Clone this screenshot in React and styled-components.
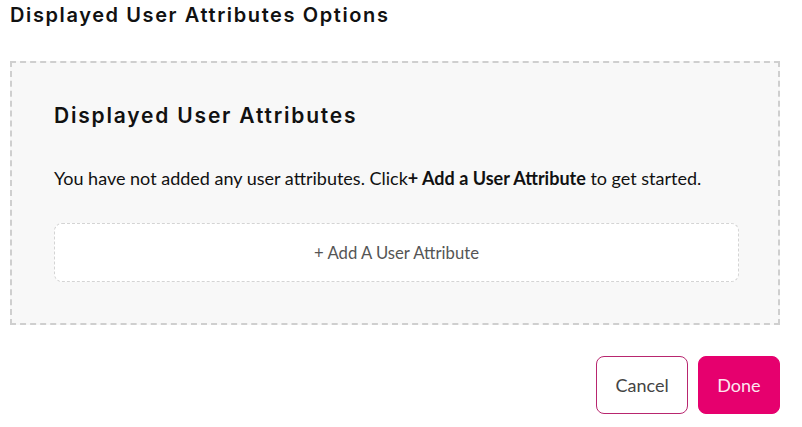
import React from "react";
import styled, { createGlobalStyle } from "styled-components";

const GlobalStyle = createGlobalStyle`
  html, body {
    margin: 0;
    padding: 0;
    background: #fff;
  }
  body {
    font-family: "Lato", "Open Sans", sans-serif;
    color: #1a1a1a;
  }
`;

const Page = styled.div`
  width: 802px;
  padding: 0 22px 0 10px;
  box-sizing: border-box;
`;

const Title = styled.h1`
  margin: 0;
  padding-top: 2px;
  font-family: "Inter", sans-serif;
  font-size: 20px;
  font-weight: 600;
  letter-spacing: 1.6px;
  line-height: 26px;
  color: #111;
`;

const Panel = styled.section`
  margin-top: 33px;
  height: 264px;
  box-sizing: border-box;
  border: 2px dashed #cfcfcf;
  background: #f8f8f8;
  padding: 39px 42px 0 42px;
`;

const PanelTitle = styled.h2`
  margin: 0;
  font-family: "Inter", sans-serif;
  font-size: 21px;
  font-weight: 600;
  letter-spacing: 1.8px;
  line-height: 28px;
  color: #111;
`;

const Message = styled.p`
  margin: 36px 0 0 0;
  font-size: 18px;
  line-height: 24px;
  color: #111;

  strong {
    font-weight: 700;
  }
`;

const AddBox = styled.button`
  display: flex;
  align-items: center;
  justify-content: center;
  width: 685px;
  height: 59px;
  margin-top: 33px;
  border: 1px dashed #d4d4d4;
  border-radius: 8px;
  background: #fff;
  font-family: "Lato", sans-serif;
  font-size: 16.7px;
  color: #555;
  cursor: pointer;
`;

const Footer = styled.div`
  display: flex;
  justify-content: flex-end;
  gap: 10px;
  margin-top: 31px;
`;

const Button = styled.button`
  height: 58px;
  padding: 0 ${(p) => (p.$primary ? "18.5px" : "18px")};
  border-radius: 8px;
  border: 1px solid ${(p) => (p.$primary ? "#e6006e" : "#b8266f")};
  background: ${(p) => (p.$primary ? "#e6006e" : "#fff")};
  color: ${(p) => (p.$primary ? "#fde6f0" : "#444")};
  font-family: "Lato", sans-serif;
  font-size: 18px;
  cursor: pointer;
`;

export default function App() {
  return (
    <>
      <GlobalStyle />
      <Page>
        <Title>Displayed User Attributes Options</Title>
        <Panel>
          <PanelTitle>Displayed User Attributes</PanelTitle>
          <Message>
            You have not added any user attributes. Click
            <strong>+ Add a User Attribute</strong> to get started.
          </Message>
          <AddBox>+ Add A User Attribute</AddBox>
        </Panel>
        <Footer>
          <Button>Cancel</Button>
          <Button $primary>Done</Button>
        </Footer>
      </Page>
    </>
  );
}
